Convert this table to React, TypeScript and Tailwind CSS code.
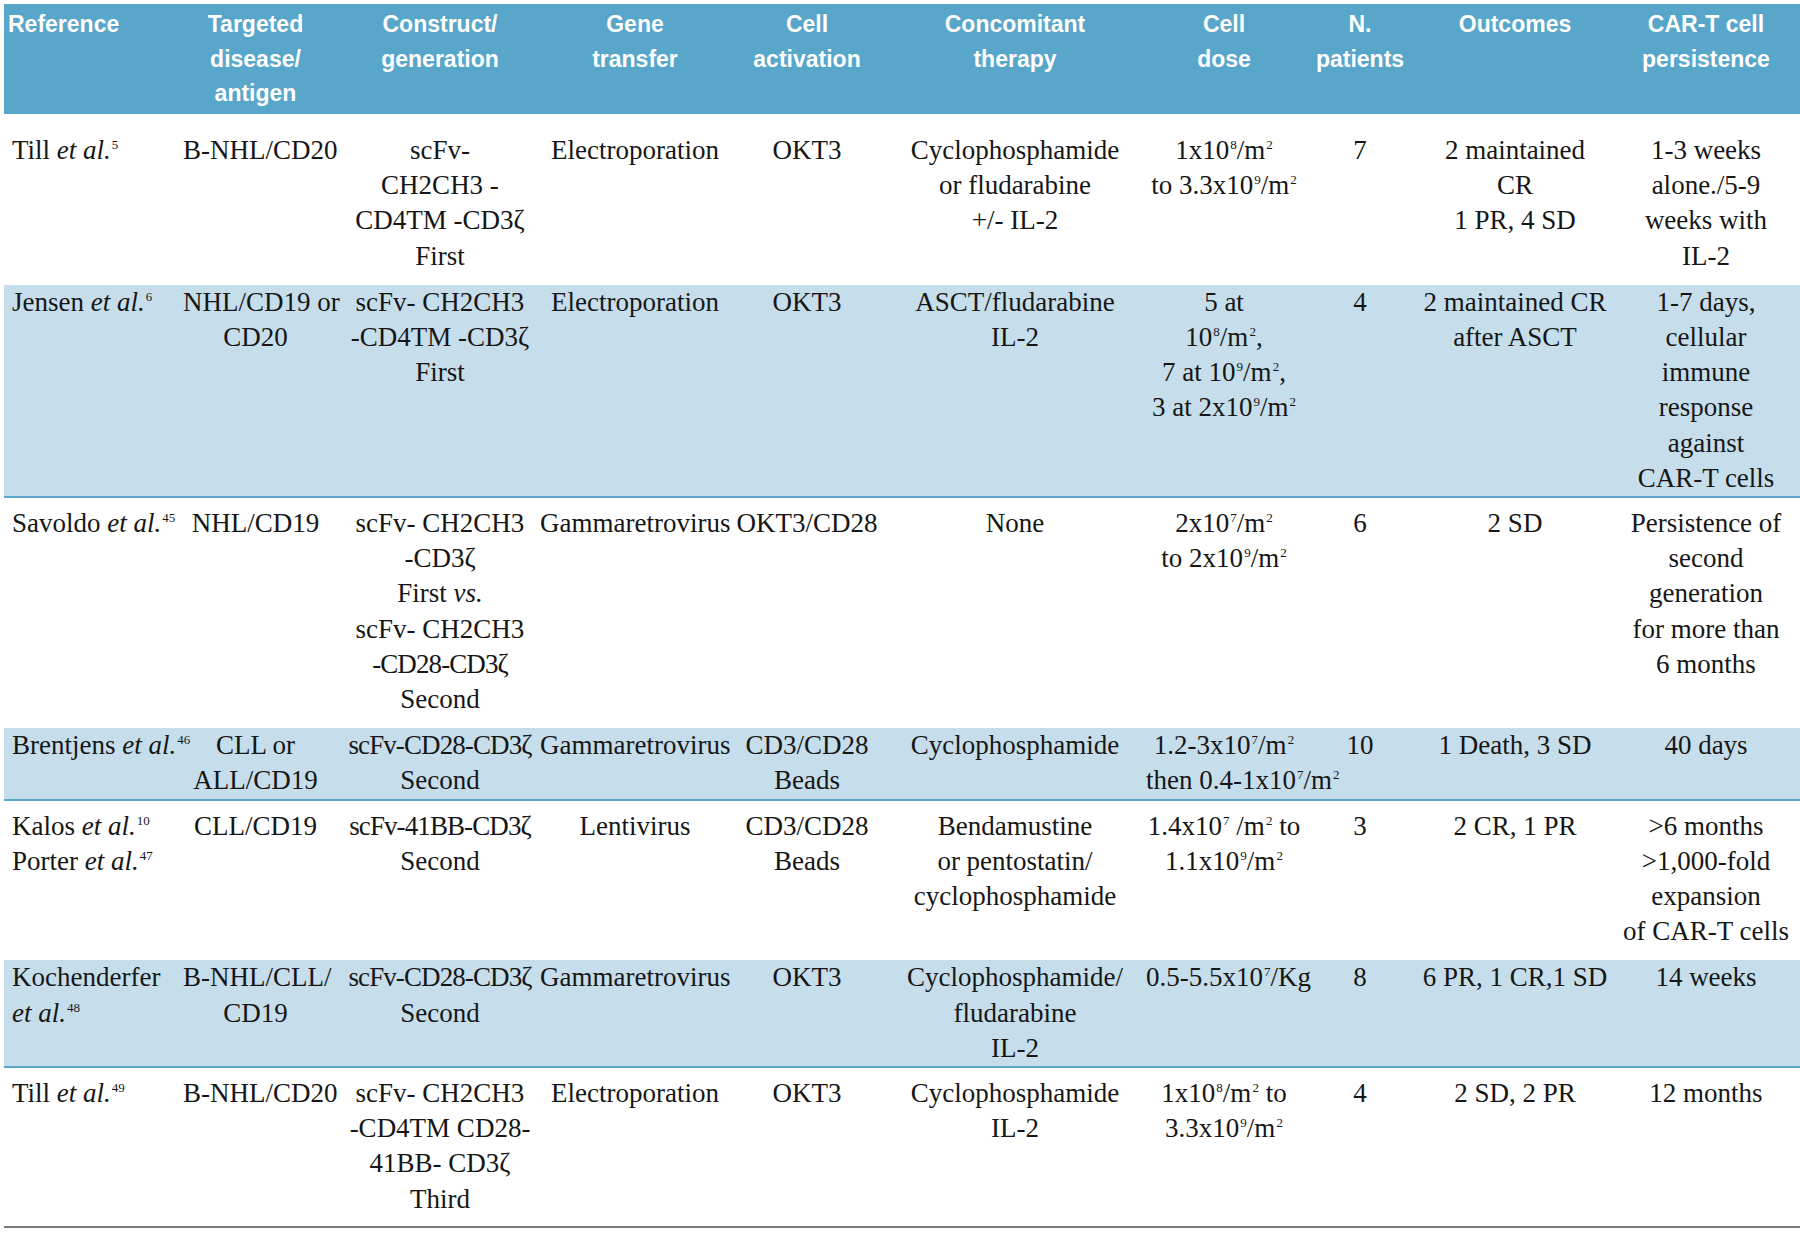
import type { ReactNode } from 'react';

const Sup = ({ children }: { children: ReactNode }) => (
  <sup className="text-[13px] top-[-0.78em] ml-[1px]">{children}</sup>
);

const Etal = ({ n }: { n: string }) => (
  <>
    <i>et al.</i>
    <Sup>{n}</Sup>
  </>
);

const Tight = ({ children }: { children: ReactNode }) => <span className="tracking-[-0.9px]">{children}</span>;

const cols = 'grid grid-cols-[179px_145px_212px_190px_154px_262px_156px_116px_194px_188px]';

// header lines, first column is left aligned
const headers: string[][] = [
  ['Reference'],
  ['Targeted', 'disease/', 'antigen'],
  ['Construct/', 'generation'],
  ['Gene', 'transfer'],
  ['Cell', 'activation'],
  ['Concomitant', 'therapy'],
  ['Cell', 'dose'],
  ['N.', 'patients'],
  ['Outcomes'],
  ['CAR-T cell', 'persistence'],
];

type Row = { shaded: boolean; cells: ReactNode[][] };

const rows: Row[] = [
  {
    shaded: false,
    cells: [
      [<>Till <Etal n="5" /></>],
      ['B-NHL/CD20'],
      ['scFv-', 'CH2CH3 -', 'CD4TM -CD3ζ', 'First'],
      ['Electroporation'],
      ['OKT3'],
      ['Cyclophosphamide', 'or fludarabine', '+/- IL-2'],
      [<>1x10<Sup>8</Sup>/m<Sup>2</Sup></>, <>to 3.3x10<Sup>9</Sup>/m<Sup>2</Sup></>],
      ['7'],
      ['2 maintained', 'CR', '1 PR, 4 SD'],
      ['1-3 weeks', 'alone./5-9', 'weeks with', 'IL-2'],
    ],
  },
  {
    shaded: true,
    cells: [
      [<>Jensen <Etal n="6" /></>],
      ['NHL/CD19 or', 'CD20'],
      ['scFv- CH2CH3', '-CD4TM -CD3ζ', 'First'],
      ['Electroporation'],
      ['OKT3'],
      ['ASCT/fludarabine', 'IL-2'],
      ['5 at', <>10<Sup>8</Sup>/m<Sup>2</Sup>,</>, <>7 at 10<Sup>9</Sup>/m<Sup>2</Sup>,</>, <>3 at 2x10<Sup>9</Sup>/m<Sup>2</Sup></>],
      ['4'],
      ['2 maintained CR', 'after ASCT'],
      ['1-7 days,', 'cellular', 'immune', 'response', 'against', 'CAR-T cells'],
    ],
  },
  {
    shaded: false,
    cells: [
      [<>Savoldo <Etal n="45" /></>],
      ['NHL/CD19'],
      ['scFv- CH2CH3', '-CD3ζ', <>First <i>vs.</i></>, 'scFv- CH2CH3', <Tight>-CD28-CD3ζ</Tight>, 'Second'],
      ['Gammaretrovirus'],
      ['OKT3/CD28'],
      ['None'],
      [<>2x10<Sup>7</Sup>/m<Sup>2</Sup></>, <>to 2x10<Sup>9</Sup>/m<Sup>2</Sup></>],
      ['6'],
      ['2 SD'],
      ['Persistence of', 'second', 'generation', 'for more than', '6 months'],
    ],
  },
  {
    shaded: true,
    cells: [
      [<>Brentjens <Etal n="46" /></>],
      ['CLL or', 'ALL/CD19'],
      [<Tight>scFv-CD28-CD3ζ</Tight>, 'Second'],
      ['Gammaretrovirus'],
      ['CD3/CD28', 'Beads'],
      ['Cyclophosphamide'],
      [<>1.2-3x10<Sup>7</Sup>/m<Sup>2</Sup></>, <>then 0.4-1x10<Sup>7</Sup>/m<Sup>2</Sup></>],
      ['10'],
      ['1 Death, 3 SD'],
      ['40 days'],
    ],
  },
  {
    shaded: false,
    cells: [
      [<>Kalos <Etal n="10" /></>, <>Porter <Etal n="47" /></>],
      ['CLL/CD19'],
      [<Tight>scFv-41BB-CD3ζ</Tight>, 'Second'],
      ['Lentivirus'],
      ['CD3/CD28', 'Beads'],
      ['Bendamustine', 'or pentostatin/', 'cyclophosphamide'],
      [<>1.4x10<Sup>7</Sup> /m<Sup>2</Sup> to</>, <>1.1x10<Sup>9</Sup>/m<Sup>2</Sup></>],
      ['3'],
      ['2 CR, 1 PR'],
      ['>6 months', '>1,000-fold', 'expansion', 'of CAR-T cells'],
    ],
  },
  {
    shaded: true,
    cells: [
      ['Kochenderfer', <Etal n="48" />],
      ['B-NHL/CLL/', 'CD19'],
      [<Tight>scFv-CD28-CD3ζ</Tight>, 'Second'],
      ['Gammaretrovirus'],
      ['OKT3'],
      ['Cyclophosphamide/', 'fludarabine', 'IL-2'],
      [<>0.5-5.5x10<Sup>7</Sup>/Kg</>],
      ['8'],
      ['6 PR, 1 CR,1 SD'],
      ['14 weeks'],
    ],
  },
  {
    shaded: false,
    cells: [
      [<>Till <Etal n="49" /></>],
      ['B-NHL/CD20'],
      ['scFv- CH2CH3', '-CD4TM CD28-', '41BB- CD3ζ', 'Third'],
      ['Electroporation'],
      ['OKT3'],
      ['Cyclophosphamide', 'IL-2'],
      [<>1x10<Sup>8</Sup>/m<Sup>2</Sup> to</>, <>3.3x10<Sup>9</Sup>/m<Sup>2</Sup></>],
      ['4'],
      ['2 SD, 2 PR'],
      ['12 months'],
    ],
  },
];

const rowClass = (row: Row, i: number) => {
  if (row.shaded) return 'bg-[#c6deeb] border-b-2 border-[#5ba6c9]';
  if (i === 0) return 'pt-[19px] pb-[11px]';
  if (i === rows.length - 1) return 'pt-[8px] pb-[9px] border-b-2 border-[#7a7a7a]';
  return 'pt-[8px] pb-[11px]';
};

const App = () => {
  return (
    <div className="min-h-screen bg-white pt-[4px] pl-[4px]">
      <div className="w-[1796px] text-[#161616] font-['Liberation_Serif',serif] text-[27px] leading-[35.2px]">
        <div className={`${cols} h-[110px] bg-[#58a6c9] text-white font-['Liberation_Sans',sans-serif] font-bold text-[23px] leading-[34.5px] pt-[3px]`}>
          {headers.map((h, i) => (
            <div key={i} className={i === 0 ? 'pl-[4px] text-left' : i === 2 ? 'pl-[12px] text-center' : 'text-center'}>
              {h.map((line) => (
                <div key={line} className="whitespace-nowrap">{line}</div>
              ))}
            </div>
          ))}
        </div>
        {rows.map((row, r) => (
          <div key={r} className={`${cols} ${rowClass(row, r)}`}>
            {row.cells.map((lines, c) => (
              <div key={c} className={c === 0 ? 'pl-[8px] text-left' : c === 2 ? 'pl-[12px] text-center' : 'text-center'}>
                {lines.map((line, k) => (
                  <div key={k} className="whitespace-nowrap">{line}</div>
                ))}
              </div>
            ))}
          </div>
        ))}
      </div>
    </div>
  );
};

export default App;
